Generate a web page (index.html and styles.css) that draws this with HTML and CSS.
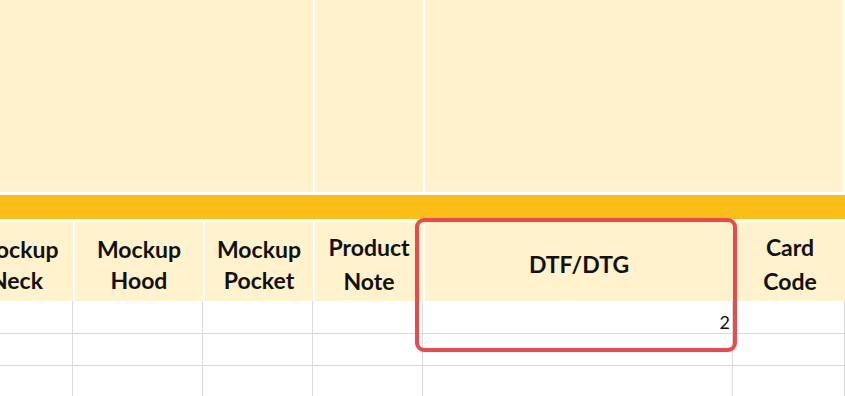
FILE: index.html
```html
<!DOCTYPE html>
<html lang="en">
<head>
  <meta charset="UTF-8">
  <meta name="viewport" content="width=device-width, initial-scale=1.0">
  <title>Order Sheet</title>
  <link rel="stylesheet" href="styles.css">
</head>
<body>

<div class="sheet">
  <!-- merged cells above the title band -->
  <div class="banner">
    <div class="banner-cell c-left"></div>
    <div class="banner-cell c-mid"></div>
    <div class="banner-cell c-right"></div>
  </div>

  <div class="band"></div>

  <div class="grid">
    <div class="head"><span>Mockup<br>Neck</span></div>
    <div class="head"><span>Mockup<br>Hood</span></div>
    <div class="head"><span>Mockup<br>Pocket</span></div>
    <div class="head tall"><span>Product<br>Note</span></div>
    <div class="head"><span>DTF/DTG</span></div>
    <div class="head tall"><span>Card<br>Code</span></div>

    <div class="cell"></div>
    <div class="cell"></div>
    <div class="cell"></div>
    <div class="cell"></div>
    <div class="cell num">2</div>
    <div class="cell"></div>

    <div class="cell"></div>
    <div class="cell"></div>
    <div class="cell"></div>
    <div class="cell"></div>
    <div class="cell"></div>
    <div class="cell"></div>

    <div class="cell"></div>
    <div class="cell"></div>
    <div class="cell"></div>
    <div class="cell"></div>
    <div class="cell"></div>
    <div class="cell"></div>
  </div>

  <div class="highlight"></div>
</div>

</body>
</html>
```

FILE: styles.css
```css
html, body {
  margin: 0;
  padding: 0;
  overflow: hidden;
  height: 100%;
  background-color: #fff;
  font-family: Lato, "Noto Sans", sans-serif;
  color: #111;
}

/* the sheet is scrolled a bit to the right, first column is cut */
.sheet {
  position: relative;
  margin-left: -40px;
  width: 885px;
}

.banner {
  display: flex;
  gap: 2px;
  height: 192px;
  padding-right: 2px;
  background-color: #fff;
}

.banner-cell {
  background-color: #fff2cc;
}

.c-left { width: 353px; }
.c-mid { width: 108px; }
.c-right { flex: 1; }

.band {
  margin-top: 3px;
  height: 24px;
  background-color: #fbbe17;
}

.grid {
  display: grid;
  grid-template-columns: 113px 130px 110px 110px 310px 112px;
  grid-template-rows: 82px 33px 32px 32px;
}

.head {
  display: flex;
  align-items: center;
  justify-content: center;
  margin-top: 3px;
  padding-top: 6px;
  border-left: 2px solid #fff;
  background-color: #fff2cc;
  font-size: 23px;
  font-weight: 700;
  line-height: 31px;
  text-align: center;
}

.head:first-child {
  border-left: none;
}

.head.tall {
  padding-top: 4px;
  line-height: 34px;
}

.cell {
  border-right: 1px solid #dadada;
  border-bottom: 1px solid #dadada;
}

.num {
  text-align: right;
  padding: 11px 2px 0 0;
  font-size: 18px;
  line-height: 20px;
}

.highlight {
  position: absolute;
  left: 455px;
  top: 218px;
  width: 322px;
  height: 134px;
  box-sizing: border-box;
  border: 4px solid #ea4a4c;
  border-radius: 9px;
}
```
